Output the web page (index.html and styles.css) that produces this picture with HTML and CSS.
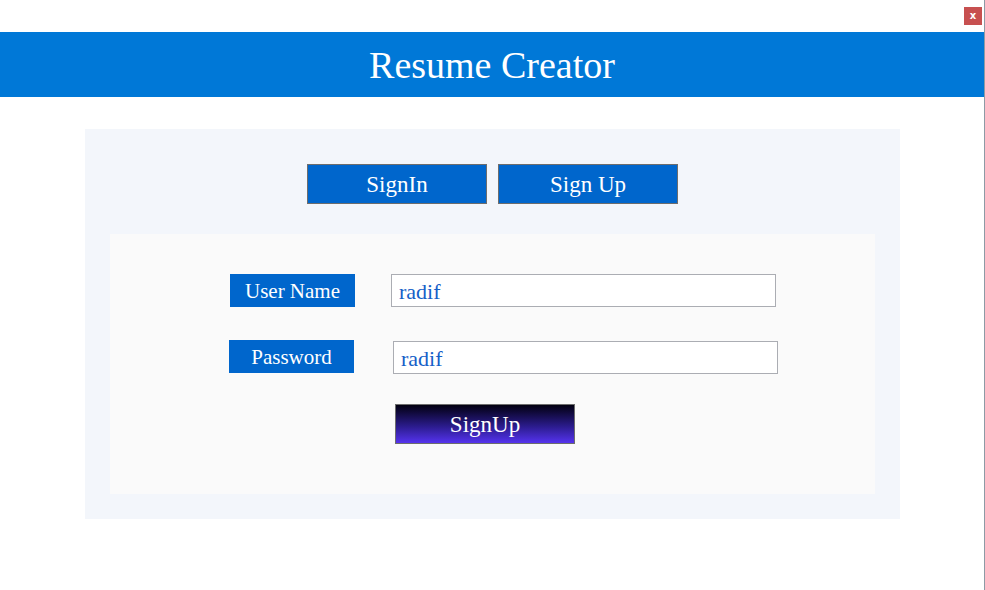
FILE: index.html
```html
<!DOCTYPE html>
<html>
<head>
<meta charset="utf-8">
<link rel="stylesheet" href="styles.css">
</head>
<body>
<div class="window">
  <div class="titlebar">
    <div class="close">x</div>
  </div>
  <div class="header">Resume Creator</div>
  <div class="main">
    <div class="panel">
      <div class="tabs">
        <div class="tab">SignIn</div>
        <div class="tab">Sign Up</div>
      </div>
      <div class="inner">
        <div class="row row-user">
          <div class="label">User Name</div>
          <div class="input">radif</div>
        </div>
        <div class="row row-pass">
          <div class="label">Password</div>
          <div class="input">radif</div>
        </div>
        <div class="row row-btn">
          <div class="submit">SignUp</div>
        </div>
      </div>
    </div>
  </div>
</div>
</body>
</html>
```

FILE: styles.css
```css
html, body {
  margin: 0;
  padding: 0;
  background: #ffffff;
}
body {
  font-family: "Liberation Serif", "DejaVu Serif", serif;
}
.window {
  width: 984px;
  height: 590px;
  border-right: 1px solid #8d9aa5;
  background: #ffffff;
  box-sizing: content-box;
}
.titlebar {
  height: 32px;
  display: flex;
  justify-content: flex-end;
  align-items: flex-start;
  padding-right: 2px;
  box-sizing: border-box;
}
.close {
  margin-top: 7px;
  width: 18px;
  height: 18px;
  background: #c75050;
  color: #ffffff;
  font-family: "DejaVu Sans", sans-serif;
  font-size: 10px;
  font-weight: bold;
  line-height: 17px;
  text-align: center;
}
.header {
  height: 65px;
  background: #0078d7;
  color: #ffffff;
  font-size: 38px;
  line-height: 66px;
  text-align: center;
}
.main {
  padding-top: 32px;
}
.panel {
  margin-left: 85px;
  width: 815px;
  height: 390px;
  background: #f3f6fb;
  padding-top: 35px;
  box-sizing: border-box;
}
.tabs {
  display: flex;
  justify-content: center;
  gap: 11px;
}
.tab {
  width: 180px;
  height: 40px;
  box-sizing: border-box;
  border: 1px solid #6d6d6d;
  background: #0066cc;
  color: #ffffff;
  font-size: 23px;
  line-height: 40px;
  text-align: center;
}
.inner {
  margin: 30px 25px 0;
  height: 260px;
  background: #fafafa;
  padding-top: 40px;
  box-sizing: border-box;
}
.row {
  display: flex;
  align-items: flex-start;
}
.label {
  width: 125px;
  height: 33px;
  background: #0066cc;
  color: #ffffff;
  font-size: 21px;
  line-height: 34px;
  text-align: center;
}
.input {
  width: 385px;
  height: 33px;
  box-sizing: border-box;
  border: 1px solid #abadb3;
  background: #ffffff;
  color: #1560c8;
  font-size: 22px;
  line-height: 33px;
  padding-left: 7px;
}
.row-user {
  padding-left: 120px;
  gap: 36px;
}
.row-pass {
  margin-top: 33px;
  padding-left: 119px;
  gap: 39px;
}
.row-pass .input {
  margin-top: 1px;
}
.row-btn {
  margin-top: 30px;
  padding-left: 285px;
}
.submit {
  width: 180px;
  height: 40px;
  box-sizing: border-box;
  border: 1px solid #6d6d6d;
  background: linear-gradient(to bottom, #020010 0%, #2a1b8a 55%, #5533ee 100%);
  color: #ffffff;
  font-size: 23px;
  line-height: 40px;
  text-align: center;
}
```
